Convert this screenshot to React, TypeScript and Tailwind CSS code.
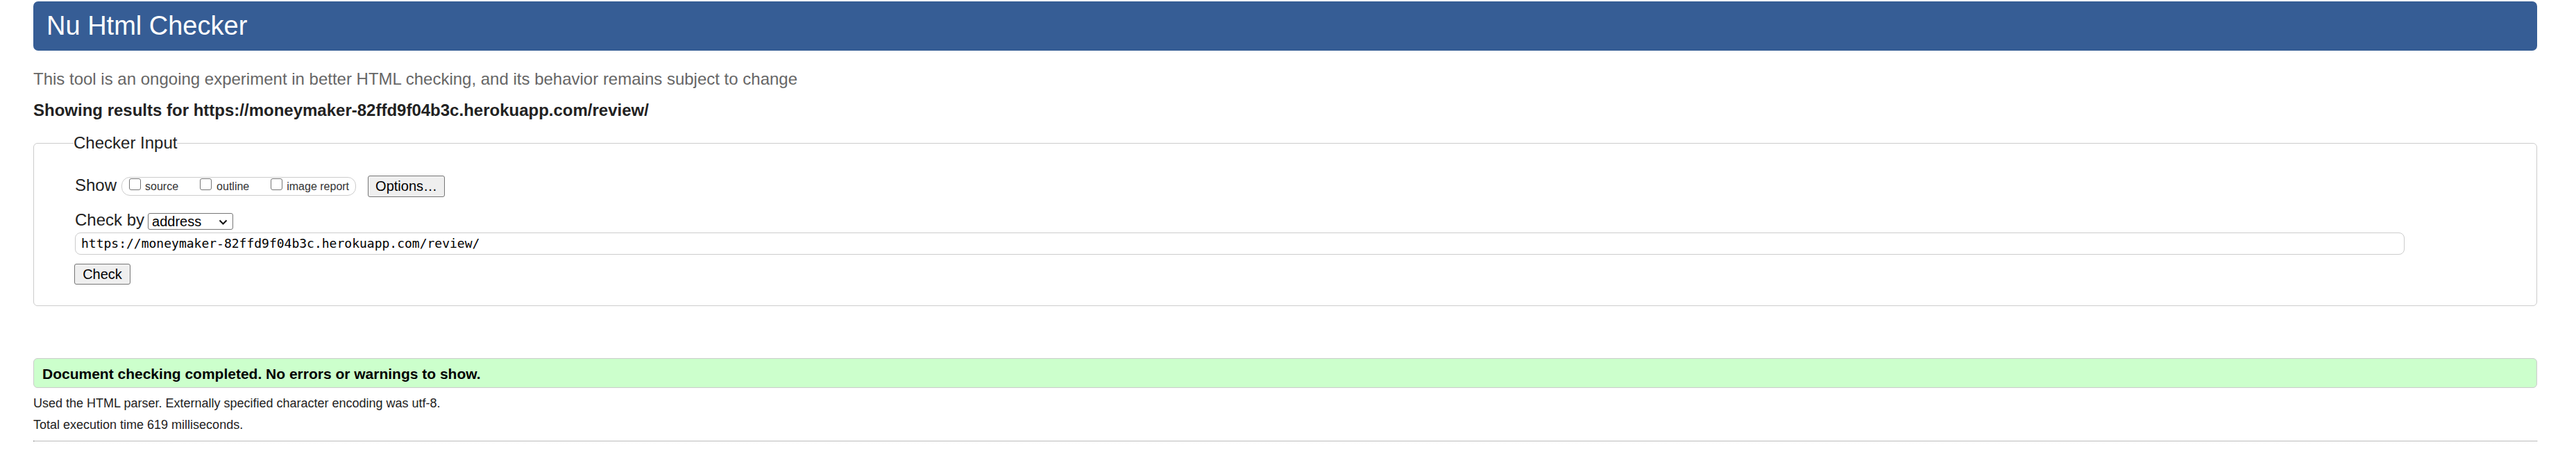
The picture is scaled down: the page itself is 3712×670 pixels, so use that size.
import React from "react";

function Box() {
  return (
    <span className="inline-block w-[17px] h-[17px] border border-[#767676] rounded-[3px] bg-white mb-[6px] shrink-0" />
  );
}

export default function App() {
  return (
    <div className="bg-white min-h-[670px] w-[3712px] pl-[48px] pr-[56px] text-[#222] font-['Liberation_Sans',Arial,sans-serif]">
      <div className="pt-[2px]">
        <h1 className="h-[71px] bg-[#365d95] rounded-[7px] flex items-center pl-[19px] text-white text-[38px] leading-[71px] font-normal">
          Nu Html Checker
        </h1>
      </div>
      <p className="mt-[26px] text-[24px] leading-[30px] text-[#666]">
        This tool is an ongoing experiment in better HTML checking, and its behavior remains subject to change
      </p>
      <p className="mt-[15px] text-[24px] leading-[30px] font-bold text-[#222]">
        Showing results for https://moneymaker-82ffd9f04b3c.herokuapp.com/review/
      </p>
      <fieldset className="mt-[19px] border border-[#ccc] rounded-[6px] pl-[59px] pr-[20px] pb-[30px]">
        <legend className="-ml-[2px] text-[24px] leading-[26px] text-[#222]">Checker Input</legend>
        <div className="mt-[34px] flex items-center h-[31px]">
          <span className="text-[24px] leading-[27px] mb-[4px] mr-[7px]">Show</span>
          <div className="h-[27px] flex items-center border border-[#ccc] rounded-[12px] pl-[10px] pr-[9px] gap-[31px]">
            <label className="flex items-center gap-[6px]">
              <Box />
              <span className="text-[16px] leading-[18px] text-[#333]">source</span>
            </label>
            <label className="flex items-center gap-[7px]">
              <Box />
              <span className="text-[16px] leading-[18px] text-[#333]">outline</span>
            </label>
            <label className="flex items-center gap-[6px]">
              <Box />
              <span className="text-[16px] leading-[18px] text-[#333]">image report</span>
            </label>
          </div>
          <button className="ml-[17px] w-[111px] h-[31px] bg-[#efefef] border border-[#767676] rounded-[3px] text-[20px] leading-[29px] text-black">
            Options…
          </button>
        </div>
        <div className="mt-[23px] flex items-center h-[24px]">
          <span className="text-[24px] leading-[24px] mb-[5px] mr-[5px]">Check by</span>
          <div className="w-[123px] h-[24px] border border-[#767676] rounded-[3px] bg-white flex items-center justify-between pl-[5px] pr-[7px]">
            <span className="text-[20px] leading-[22px] text-black">address</span>
            <svg width="13" height="8" viewBox="0 0 13 8" className="mt-[1px]">
              <path d="M1.5 1.5 L6.5 6.5 L11.5 1.5" fill="none" stroke="#111" strokeWidth="2" />
            </svg>
          </div>
        </div>
        <div className="mt-[4px] w-[3357px] h-[32px] border border-[#ccc] rounded-[8px] flex items-center pl-[8px] bg-white">
          <span className="font-['DejaVu_Sans_Mono','Liberation_Mono',monospace] text-[18px] leading-[22px] text-black">
            https://moneymaker-82ffd9f04b3c.herokuapp.com/review/
          </span>
        </div>
        <button className="mt-[13px] -ml-[1px] w-[81px] h-[30px] bg-[#efefef] border border-[#767676] rounded-[3px] text-[20px] leading-[28px] text-black block">
          Check
        </button>
      </fieldset>
      <div className="mt-[75px] h-[43px] bg-[#ccffcc] border border-[#ccc] rounded-[6px] flex items-center pl-[12px] pt-[3px]">
        <span className="font-bold text-[21px] leading-[24px] text-black">
          Document checking completed. No errors or warnings to show.
        </span>
      </div>
      <p className="mt-[7px] text-[18px] leading-[31px] text-[#222]">
        Used the HTML parser. Externally specified character encoding was utf-8.
      </p>
      <p className="text-[18px] leading-[31px] text-[#222]">Total execution time 619 milliseconds.</p>
      <div className="mt-[7px] border-t border-dotted border-[#777]" />
    </div>
  );
}
